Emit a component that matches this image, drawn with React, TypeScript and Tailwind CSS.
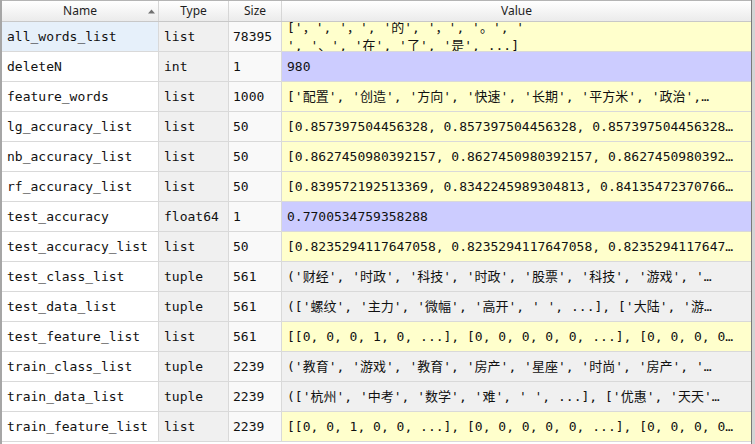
type Kind = 'list' | 'num' | 'tuple'

interface Row {
  name: string
  type: string
  size: string
  kind: Kind
  value: string[]
}

const rows: Row[] = [
  {
    name: 'all_words_list',
    type: 'list',
    size: '78395',
    kind: 'list',
    value: ["['，', '，', '的', '，', '。', '", "', '、', '在', '了', '是', ...]"],
  },
  { name: 'deleteN', type: 'int', size: '1', kind: 'num', value: ['980'] },
  {
    name: 'feature_words',
    type: 'list',
    size: '1000',
    kind: 'list',
    value: ["['配置', '创造', '方向', '快速', '长期', '平方米', '政治',…"],
  },
  {
    name: 'lg_accuracy_list',
    type: 'list',
    size: '50',
    kind: 'list',
    value: ['[0.857397504456328, 0.857397504456328, 0.857397504456328…'],
  },
  {
    name: 'nb_accuracy_list',
    type: 'list',
    size: '50',
    kind: 'list',
    value: ['[0.8627450980392157, 0.8627450980392157, 0.8627450980392…'],
  },
  {
    name: 'rf_accuracy_list',
    type: 'list',
    size: '50',
    kind: 'list',
    value: ['[0.839572192513369, 0.8342245989304813, 0.84135472370766…'],
  },
  { name: 'test_accuracy', type: 'float64', size: '1', kind: 'num', value: ['0.7700534759358288'] },
  {
    name: 'test_accuracy_list',
    type: 'list',
    size: '50',
    kind: 'list',
    value: ['[0.8235294117647058, 0.8235294117647058, 0.8235294117647…'],
  },
  {
    name: 'test_class_list',
    type: 'tuple',
    size: '561',
    kind: 'tuple',
    value: ["('财经', '时政', '科技', '时政', '股票', '科技', '游戏', '…"],
  },
  {
    name: 'test_data_list',
    type: 'tuple',
    size: '561',
    kind: 'tuple',
    value: ["(['螺纹', '主力', '微幅', '高开', ' ', ...], ['大陆', '游…"],
  },
  {
    name: 'test_feature_list',
    type: 'list',
    size: '561',
    kind: 'list',
    value: ['[[0, 0, 0, 1, 0, ...], [0, 0, 0, 0, 0, ...], [0, 0, 0, 0…'],
  },
  {
    name: 'train_class_list',
    type: 'tuple',
    size: '2239',
    kind: 'tuple',
    value: ["('教育', '游戏', '教育', '房产', '星座', '时尚', '房产', '…"],
  },
  {
    name: 'train_data_list',
    type: 'tuple',
    size: '2239',
    kind: 'tuple',
    value: ["(['杭州', '中考', '数学', '难', ' ', ...], ['优惠', '天天'…"],
  },
  {
    name: 'train_feature_list',
    type: 'list',
    size: '2239',
    kind: 'list',
    value: ['[[0, 0, 1, 0, 0, ...], [0, 0, 0, 0, 0, ...], [0, 0, 0, 0…'],
  },
]

const valueBg: Record<Kind, string> = {
  list: 'bg-[#ffffcc]',
  num: 'bg-[#ccccff]',
  tuple: 'bg-[#f0f0f0]',
}

const mono = "font-['DejaVu_Sans_Mono','Noto_Sans_CJK_SC',monospace] text-[13px] text-[#111]"

function HeaderCell({ label, sorted, className = '' }: { label: string; sorted?: boolean; className?: string }) {
  return (
    <div
      className={`relative flex items-center justify-center border-r border-[#d6d6d6] font-['Noto_Sans',sans-serif] text-[12px] text-[#1e1e1e] ${className}`}
    >
      {label}
      {sorted && (
        <svg className="absolute right-[3px] top-[8px]" width="7" height="5" viewBox="0 0 7 5">
          <path d="M0 4.5 L3.5 0.5 L7 4.5 Z" fill="#707070" />
        </svg>
      )}
    </div>
  )
}

export default function App() {
  return (
    <div className="w-[755px] h-[444px] overflow-hidden bg-[#d4d4d4] flex">
      <div className="w-[752px] h-full bg-white border-l-2 border-[#a6a6a6] border-r border-r-[#7a7a7a] flex flex-col">
        {/* Header */}
        <div className="grid grid-cols-[157px_70px_53px_1fr] h-[22px] shrink-0 border-t border-[#b4b4b4] border-b border-b-[#c8c8c8] bg-gradient-to-b from-white to-[#ebebeb]">
          <HeaderCell label="Name" sorted />
          <HeaderCell label="Type" />
          <HeaderCell label="Size" />
          <HeaderCell label="Value" className="border-r-0" />
        </div>

        {/* Rows */}
        {rows.map((row, i) => (
          <div
            key={row.name}
            className="grid grid-cols-[157px_70px_53px_1fr] h-[30px] shrink-0 border-b border-[#d9d9d9]"
          >
            <div
              className={`${mono} flex items-center pl-[5px] border-r border-[#d9d9d9] ${
                i === 0 ? 'bg-[#e6f0fa]' : 'bg-white'
              }`}
            >
              {row.name}
            </div>
            <div className={`${mono} flex items-center pl-[5px] border-r border-[#d9d9d9] bg-[#f0f0f0]`}>
              {row.type}
            </div>
            <div className={`${mono} flex items-center pl-[4px] border-r border-[#d9d9d9] bg-[#f9f9f9]`}>
              {row.size}
            </div>
            <div
              className={`${mono} ${valueBg[row.kind]} flex flex-col justify-center overflow-hidden pl-[5px] pr-[6px] whitespace-pre leading-[18px]`}
            >
              {row.value.map((line, j) => (
                <span key={j} className="block shrink-0 overflow-hidden">
                  {line}
                </span>
              ))}
            </div>
          </div>
        ))}
      </div>
    </div>
  )
}
